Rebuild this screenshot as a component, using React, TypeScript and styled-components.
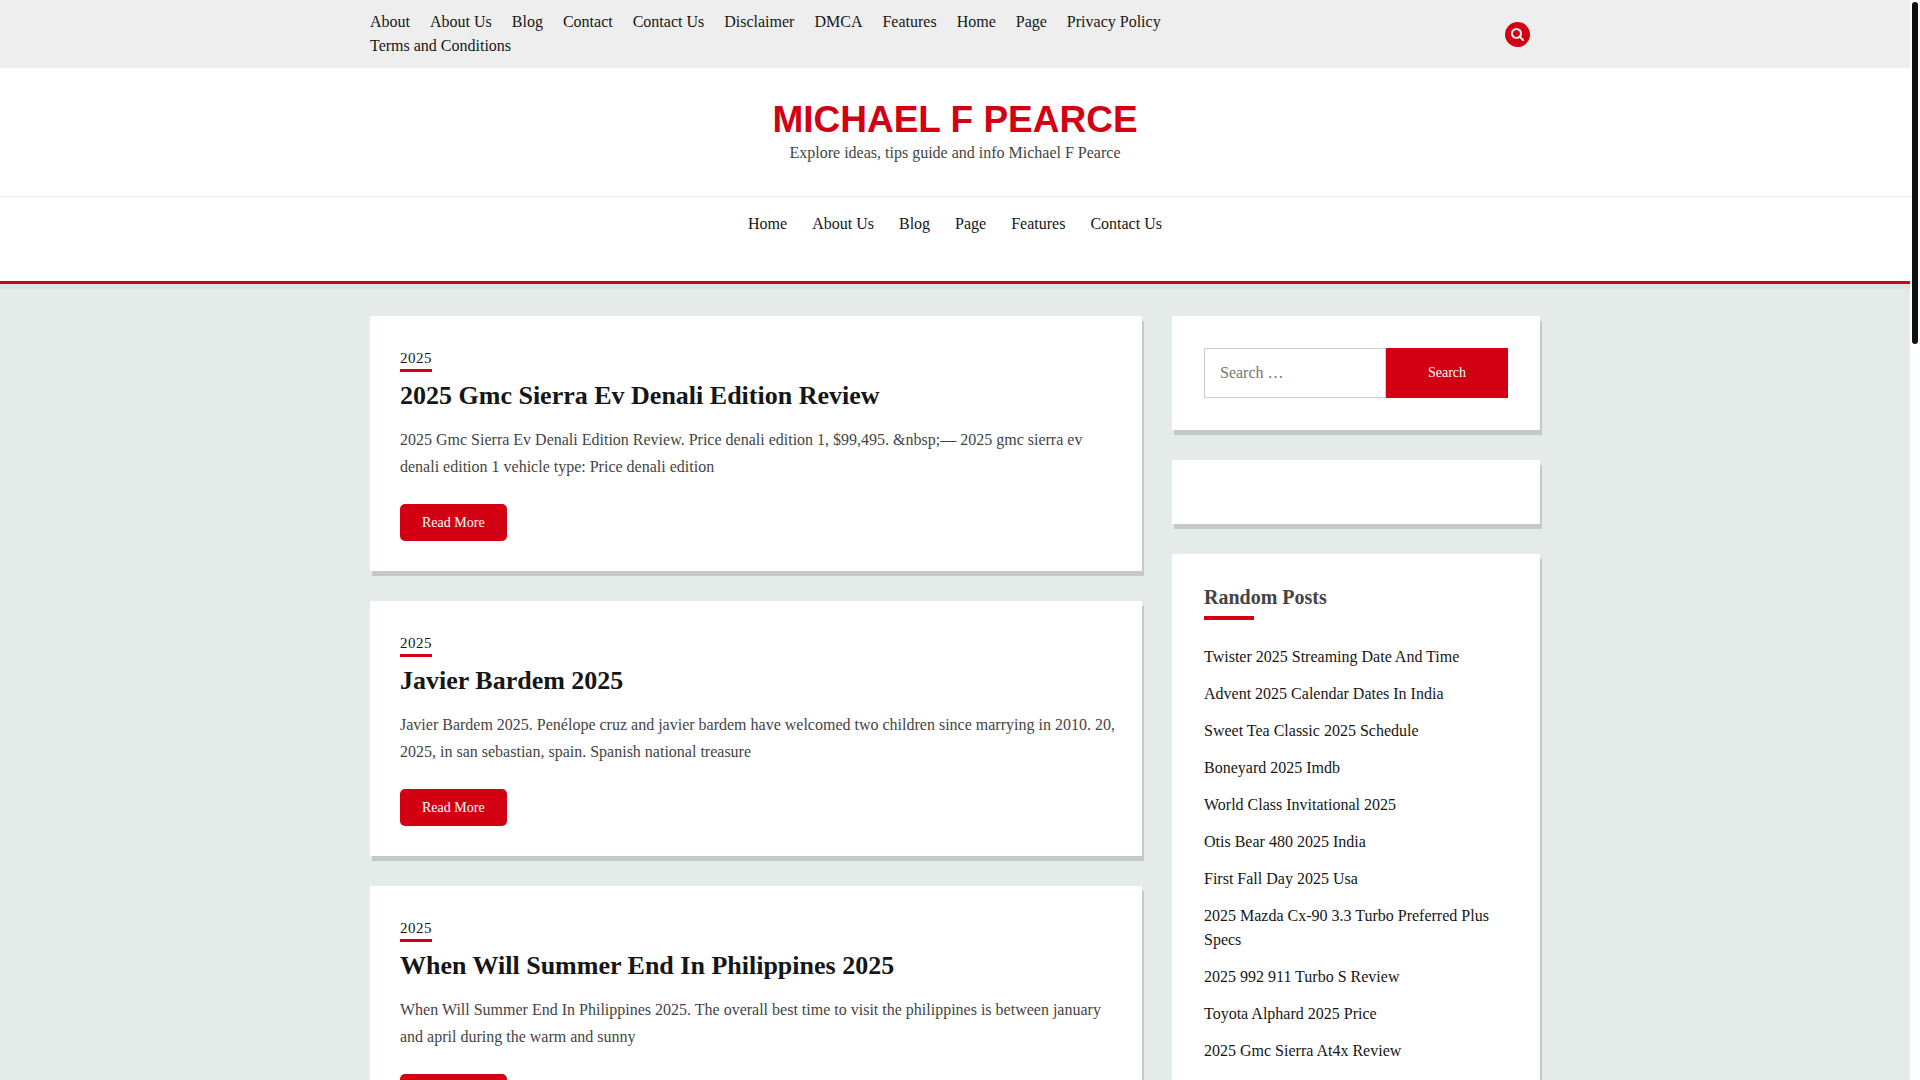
import React from "react";
import styled, { createGlobalStyle } from "styled-components";

const serif = `"Liberation Serif", "Times New Roman", serif`;
const red = "#d30014";
const ink = "#161616";
const body = "#444444";

const GlobalStyle = createGlobalStyle`
  *, *::before, *::after { box-sizing: border-box; }
  body { margin: 0; background: #ffffff; color: ${body}; font: 16px/24px ${serif}; }
  a { color: ${ink}; text-decoration: none; }
  a:hover { color: ${red}; }
  h1, h2, p, ul { margin: 0; padding: 0; }
  ul { list-style: none; }
`;

const Shell = styled.div`
  display: grid;
  grid-template-columns: minmax(0, 1fr) 10px;
  height: 100vh;
`;

const Page = styled.div`
  overflow-y: auto;
  scrollbar-width: none;
  background: #e5ebe9;
`;

const ScrollRail = styled.div`
  padding: 2px;
  background: #ffffff;
`;

const ScrollThumb = styled.div`
  width: 6px;
  height: 342px;
  border-radius: 3px;
  background: #111111;
`;

const Container = styled.div`
  width: 100%;
  max-width: 1170px;
  margin: 0 auto;
`;

const TopBar = styled.div`
  padding: 10px 0;
  background: #eeeeee;
`;

const TopBarRow = styled(Container)`
  display: flex;
  align-items: center;
  justify-content: space-between;
  padding-right: 10px;
`;

const TopMenu = styled.ul`
  display: flex;
  flex-wrap: wrap;
  column-gap: 20px;
  width: 75%;
`;

const RoundButton = styled.button`
  display: flex;
  align-items: center;
  justify-content: center;
  width: 25px;
  height: 25px;
  padding: 0;
  border: 0;
  border-radius: 50%;
  background: ${red};
  color: #eeeeee;
  cursor: pointer;
`;

const Header = styled.header`
  background: #ffffff;
  border-bottom: 3px solid ${red};
  box-shadow: 0 5px 0 #dde3e0;
`;

const Branding = styled.div`
  padding: 31px 0;
  border-bottom: 1px solid #eeeeee;
  text-align: center;
`;

const SiteTitle = styled.h1`
  font: bold 37px/42px "Liberation Sans", Arial, sans-serif;
  text-transform: uppercase;

  a { color: ${red}; }
`;

const MainMenu = styled.ul`
  display: flex;
  justify-content: center;
  gap: 25px;
  padding: 15px 0 45px;
`;

const Columns = styled(Container)`
  display: grid;
  grid-template-columns: minmax(0, 1fr) 368px;
  align-items: start;
  gap: 30px;
  padding: 32px 0;
`;

const Stack = styled.div`
  display: grid;
  gap: 30px;
`;

const Card = styled.section`
  padding: 32px;
  background: #ffffff;
  box-shadow: 2px 5px 0 #c5cac8;
`;

const PostCard = styled(Card).attrs({ as: "article" })`
  display: flex;
  flex-direction: column;
  align-items: flex-start;
  padding: 31px 20px 30px 30px;
`;

const Category = styled.a`
  border-bottom: 3px solid ${red};
  font-size: 15px;
  line-height: 22px;
  letter-spacing: 0.5px;
`;

const PostTitle = styled.h2`
  margin-top: 8px;
  font-size: 26px;
  line-height: 32px;
`;

const Excerpt = styled.p`
  margin: 14px 0 24px;
  line-height: 27px;
`;

const ReadMore = styled.a`
  padding: 0 22px;
  border-radius: 5px;
  background: ${red};
  color: #ffffff;
  font-size: 14px;
  line-height: 37px;

  &:hover { color: #ffffff; }
`;

const SearchForm = styled.form`
  display: flex;
  height: 50px;
`;

const SearchLabel = styled.label`
  flex: 1;
  min-width: 0;
`;

const SearchInput = styled.input`
  width: 100%;
  height: 100%;
  padding: 0 15px;
  border: 1px solid #cccccc;
  border-radius: 0;
  font: 16px/24px ${serif};

  &::placeholder { color: #757575; }
`;

const SearchSubmit = styled.button`
  width: 122px;
  border: 0;
  background: ${red};
  color: #ffffff;
  font: 14px/24px ${serif};
  cursor: pointer;
`;

const WidgetTitle = styled.h2`
  margin-bottom: 25px;
  font-size: 20px;
  line-height: 22px;

  &::after {
    content: "";
    display: block;
    width: 50px;
    height: 4px;
    margin-top: 8px;
    background: ${red};
  }
`;

const PostList = styled.ul`
  display: grid;
  gap: 13px;
`;

const topLinks = ["About", "About Us", "Blog", "Contact", "Contact Us", "Disclaimer", "DMCA", "Features", "Home", "Page", "Privacy Policy", "Terms and Conditions"];
const mainLinks = ["Home", "About Us", "Blog", "Page", "Features", "Contact Us"];

const posts = [
  {
    title: "2025 Gmc Sierra Ev Denali Edition Review",
    text: "2025 Gmc Sierra Ev Denali Edition Review. Price denali edition 1, $99,495. &nbsp;— 2025 gmc sierra ev denali edition 1 vehicle type: Price denali edition",
  },
  {
    title: "Javier Bardem 2025",
    text: "Javier Bardem 2025. Penélope cruz and javier bardem have welcomed two children since marrying in 2010. 20, 2025, in san sebastian, spain. Spanish national treasure",
  },
  {
    title: "When Will Summer End In Philippines 2025",
    text: "When Will Summer End In Philippines 2025. The overall best time to visit the philippines is between january and april during the warm and sunny",
  },
];

const randomPosts = [
  "Twister 2025 Streaming Date And Time",
  "Advent 2025 Calendar Dates In India",
  "Sweet Tea Classic 2025 Schedule",
  "Boneyard 2025 Imdb",
  "World Class Invitational 2025",
  "Otis Bear 480 2025 India",
  "First Fall Day 2025 Usa",
  "2025 Mazda Cx-90 3.3 Turbo Preferred Plus Specs",
  "2025 992 911 Turbo S Review",
  "Toyota Alphard 2025 Price",
  "2025 Gmc Sierra At4x Review",
];

function LinkItems({ items }: { items: string[] }) {
  return (
    <>
      {items.map((item) => (
        <li key={item}><a href="#">{item}</a></li>
      ))}
    </>
  );
}

function SearchIcon() {
  return (
    <svg width="13" height="13" viewBox="0 0 1664 1664" fill="currentColor" aria-hidden="true">
      <path d="M1152 704q0-185-131.5-316.5t-316.5-131.5-316.5 131.5-131.5 316.5 131.5 316.5 316.5 131.5 316.5-131.5 131.5-316.5zm512 832q0 52-38 90t-90 38q-54 0-90-38l-343-342q-179 124-399 124-143 0-273.5-55.5t-225-150-150-225-55.5-273.5 55.5-273.5 150-225 225-150 273.5-55.5 273.5 55.5 225 150 150 225 55.5 273.5q0 220-124 399l343 343q37 37 37 90z" />
    </svg>
  );
}

export default function App() {
  return (
    <>
      <GlobalStyle />
      <Shell>
        <Page>
          <TopBar>
            <TopBarRow>
              <TopMenu><LinkItems items={topLinks} /></TopMenu>
              <RoundButton type="button" aria-label="Open search"><SearchIcon /></RoundButton>
            </TopBarRow>
          </TopBar>
          <Header>
            <Branding>
              <SiteTitle><a href="#">Michael F Pearce</a></SiteTitle>
              <p>Explore ideas, tips guide and info Michael F Pearce</p>
            </Branding>
            <nav>
              <MainMenu><LinkItems items={mainLinks} /></MainMenu>
            </nav>
          </Header>
          <Columns>
            <Stack as="main">
              {posts.map((post) => (
                <PostCard key={post.title}>
                  <Category href="#">2025</Category>
                  <PostTitle><a href="#">{post.title}</a></PostTitle>
                  <Excerpt>{post.text}</Excerpt>
                  <ReadMore href="#">Read More</ReadMore>
                </PostCard>
              ))}
            </Stack>
            <Stack as="aside">
              <Card>
                <SearchForm role="search" onSubmit={(event) => event.preventDefault()}>
                  <SearchLabel>
                    <SearchInput type="search" placeholder="Search …" aria-label="Search for" />
                  </SearchLabel>
                  <SearchSubmit type="submit">Search</SearchSubmit>
                </SearchForm>
              </Card>
              <Card />
              <Card>
                <WidgetTitle>Random Posts</WidgetTitle>
                <PostList><LinkItems items={randomPosts} /></PostList>
              </Card>
            </Stack>
          </Columns>
        </Page>
        <ScrollRail><ScrollThumb /></ScrollRail>
      </Shell>
    </>
  );
}
